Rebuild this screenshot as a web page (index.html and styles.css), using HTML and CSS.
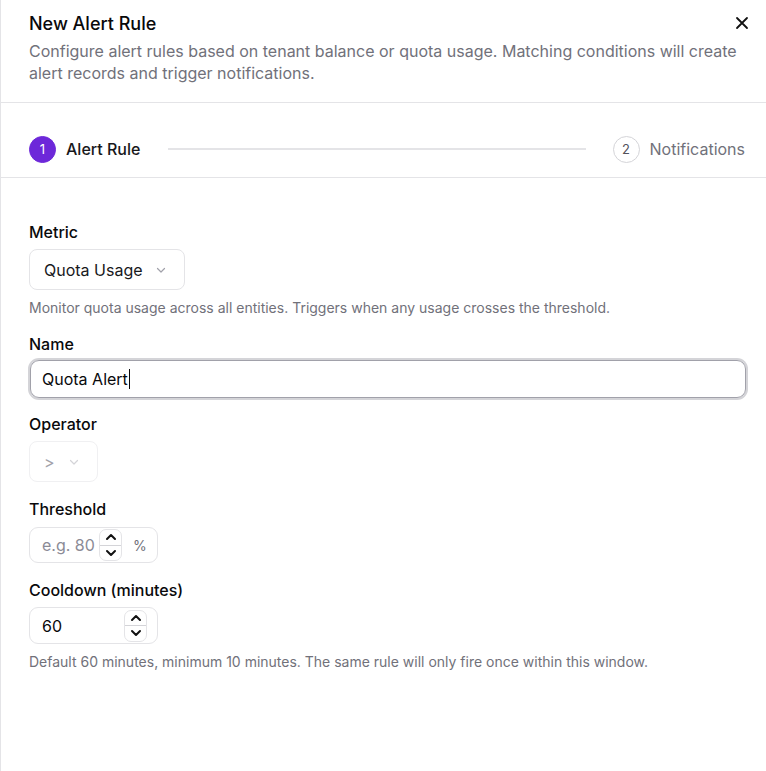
FILE: index.html
```html
<!DOCTYPE html>
<html lang="en">
<head>
<meta charset="utf-8">
<title>New Alert Rule</title>
<link rel="stylesheet" href="styles.css">
</head>
<body>
<div class="panel">
  <header class="header">
    <div class="header-text">
      <h1 class="title">New Alert Rule</h1>
      <p class="desc">Configure alert rules based on tenant balance or quota usage. Matching conditions will create alert records and trigger notifications.</p>
    </div>
    <button class="close" aria-label="Close">
      <svg width="14" height="14" viewBox="0 0 14 14"><path d="M2 2L12 12M12 2L2 12" stroke="#111" stroke-width="1.8" stroke-linecap="round"/></svg>
    </button>
  </header>

  <nav class="steps">
    <div class="step active"><span class="step-num">1</span><span class="step-label">Alert Rule</span></div>
    <div class="step-line"></div>
    <div class="step"><span class="step-num">2</span><span class="step-label">Notifications</span></div>
  </nav>

  <form class="form">
    <div class="field">
      <label class="label">Metric</label>
      <div class="select">
        <span>Quota Usage</span>
        <svg class="chev" width="12" height="12" viewBox="0 0 12 12"><path d="M2.5 4.5L6 8L9.5 4.5" fill="none" stroke="#a1a1aa" stroke-width="1.2" stroke-linecap="round" stroke-linejoin="round"/></svg>
      </div>
      <p class="help">Monitor quota usage across all entities. Triggers when any usage crosses the threshold.</p>
    </div>

    <div class="field">
      <label class="label">Name</label>
      <div class="input focused"><span class="val">Quota Alert</span><span class="caret"></span></div>
    </div>

    <div class="field">
      <label class="label">Operator</label>
      <div class="select disabled">
        <span>&gt;</span>
        <svg class="chev" width="12" height="12" viewBox="0 0 12 12"><path d="M2.5 4.5L6 8L9.5 4.5" fill="none" stroke="#d4d4d8" stroke-width="1.2" stroke-linecap="round" stroke-linejoin="round"/></svg>
      </div>
    </div>

    <div class="field field-threshold">
      <label class="label">Threshold</label>
      <div class="num threshold">
        <span class="placeholder">e.g. 80</span>
        <span class="spin">
          <svg width="12" height="8" viewBox="0 0 12 8"><path d="M2 6L6 2L10 6" fill="none" stroke="#111" stroke-width="2" stroke-linecap="round" stroke-linejoin="round"/></svg>
          <span class="spin-sep"></span>
          <svg width="12" height="8" viewBox="0 0 12 8"><path d="M2 2L6 6L10 2" fill="none" stroke="#111" stroke-width="2" stroke-linecap="round" stroke-linejoin="round"/></svg>
        </span>
        <span class="unit">%</span>
      </div>
    </div>

    <div class="field field-cooldown">
      <label class="label">Cooldown (minutes)</label>
      <div class="num cooldown">
        <span class="val">60</span>
        <span class="spin">
          <svg width="12" height="8" viewBox="0 0 12 8"><path d="M2 6L6 2L10 6" fill="none" stroke="#111" stroke-width="2" stroke-linecap="round" stroke-linejoin="round"/></svg>
          <span class="spin-sep"></span>
          <svg width="12" height="8" viewBox="0 0 12 8"><path d="M2 2L6 6L10 2" fill="none" stroke="#111" stroke-width="2" stroke-linecap="round" stroke-linejoin="round"/></svg>
        </span>
      </div>
      <p class="help">Default 60 minutes, minimum 10 minutes. The same rule will only fire once within this window.</p>
    </div>
  </form>
</div>
</body>
</html>
```
FILE: styles.css
```css
* { box-sizing: border-box; }
html, body { margin: 0; padding: 0; background: #fff; }
body {
  font-family: Inter, "Noto Sans", sans-serif;
  color: #18181b;
  width: 766px;
  height: 771px;
  overflow: hidden;
}
.panel {
  border-left: 1px solid #e4e4e7;
  min-height: 771px;
}
.header {
  display: flex;
  justify-content: space-between;
  align-items: flex-start;
  padding: 13px 17px 18px 28px;
  border-bottom: 1px solid #e4e4e7;
}
.header-text {
  flex: 1;
  margin-right: -14px;
}
.title {
  margin: 0;
  font-size: 18px;
  font-weight: 500;
  line-height: 22px;
  color: #09090b;
}
.desc {
  margin: 5px 0 0;
  font-size: 16px;
  line-height: 22px;
  color: #71717a;
}
.close {
  border: 0;
  background: none;
  padding: 0;
  margin-top: 3px;
  width: 14px;
  height: 14px;
  display: flex;
}
.steps {
  display: flex;
  align-items: center;
  padding: 33px 21px 15px 28px;
  height: 75px;
  border-bottom: 1px solid #e4e4e7;
}
.step {
  display: flex;
  align-items: center;
  gap: 10px;
}
.step-num {
  width: 27px;
  height: 27px;
  border-radius: 50%;
  display: flex;
  align-items: center;
  justify-content: center;
  font-size: 13px;
  color: #52525b;
  border: 1px solid #d4d4d8;
}
.step.active .step-num {
  background: #6d28d9;
  border-color: #6d28d9;
  color: #fff;
}
.step-label {
  font-size: 16px;
  font-weight: 400;
  color: #71717a;
}
.step.active .step-label {
  font-weight: 500;
  color: #18181b;
}
.step-line {
  flex: 1;
  height: 2px;
  background: #e4e4e7;
  margin: 0 27px 0 28px;
}
.form {
  display: flex;
  flex-direction: column;
  gap: 16px;
  padding: 44px 19px 0 28px;
}
.field { display: flex; flex-direction: column; }
.field-threshold { margin-top: 1px; }
.field-threshold .label { margin-bottom: 8px; }
.field-cooldown { margin-top: 1px; }
.label {
  font-size: 16px;
  font-weight: 500;
  line-height: 20px;
  margin-bottom: 7px;
  color: #09090b;
}
.select {
  display: flex;
  align-items: center;
  align-self: flex-start;
  height: 41px;
  padding: 0 17px 0 14px;
  border: 1px solid #e4e4e7;
  border-radius: 8px;
  font-size: 16px;
  color: #18181b;
}
.select .chev { margin-left: 12px; }
.select.disabled {
  color: #a1a1aa;
  border-color: #f0f0f2;
  padding: 0 17px 0 14px;
}
.select.disabled .chev { margin-left: 13px; }
.help {
  margin: 8px 0 0;
  font-size: 14px;
  line-height: 20px;
  color: #71717a;
}
.input {
  display: flex;
  align-items: center;
  height: 38px;
  padding: 0 11px;
  border-radius: 9px;
  font-size: 16px;
  color: #09090b;
}
.input.focused {
  border: 1px solid #a1a1aa;
  box-shadow: 0 0 0 2px #d4d4d8;
  margin: -1px 1px 0 1px;
}
.caret {
  width: 1px;
  height: 20px;
  background: #09090b;
  margin-left: 1px;
}
.num {
  display: flex;
  align-items: center;
  align-self: flex-start;
  width: 129px;
  height: 36px;
  border: 1px solid #e4e4e7;
  border-radius: 9px;
  font-size: 16px;
  padding-left: 12px;
}
.num.cooldown { height: 37px; }
.placeholder { color: #8b8b96; width: 57px; }
.num .val { width: 82px; color: #09090b; }
.spin {
  width: 23px;
  height: 32px;
  border: 1px solid #e4e4e7;
  border-radius: 7px;
  display: flex;
  flex-direction: column;
  align-items: center;
  justify-content: space-evenly;
  background: #fff;
}
.spin-sep {
  width: 100%;
  height: 1px;
  background: #d4d4d8;
}
.unit {
  margin-left: 11px;
  font-size: 14px;
  color: #71717a;
}
```
